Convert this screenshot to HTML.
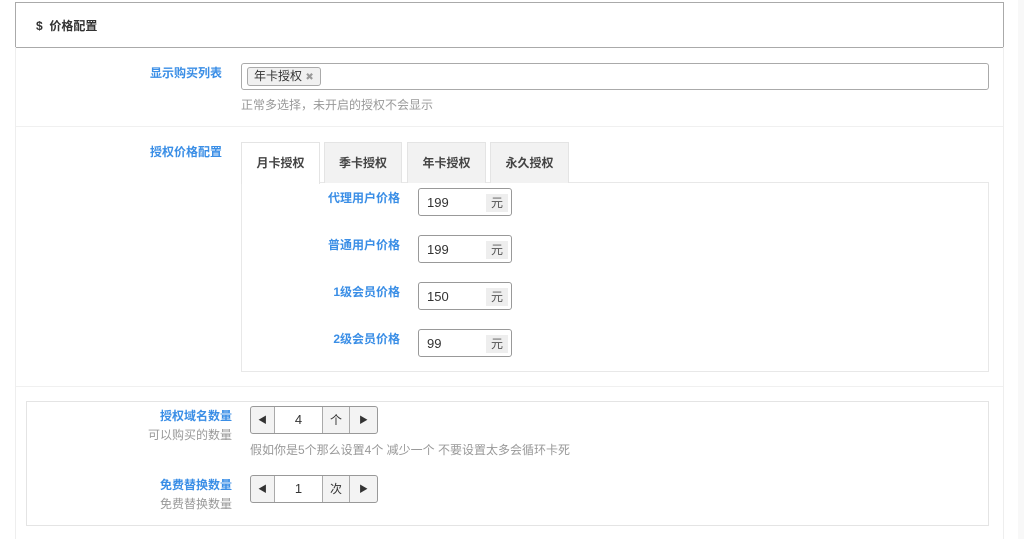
<!DOCTYPE html>
<html><head><meta charset="utf-8"><style>
*{box-sizing:border-box;margin:0;padding:0}
body{width:1024px;height:539px;background:#fff;font-family:"Liberation Sans","Noto Sans CJK SC",sans-serif;font-size:12px;color:#333;position:relative;overflow:hidden}
.a{position:absolute}
.lbl{color:#3a8ee6;font-weight:bold;text-align:right}
.help{color:#999}
.inp{border:1px solid #aaa;border-radius:3px;background:#fff}
.tab{position:absolute;top:142px;height:41px;background:#f2f2f2;border:1px solid #e4e4e4;border-bottom:none;text-align:center;line-height:40px;font-weight:bold;color:#444}
.pr{position:absolute;left:418px;width:94px;height:28px;border:1px solid #999;border-radius:3px}
.pr span{position:absolute;left:8px;top:6px;font-size:13px}
.pr i{position:absolute;right:3px;top:5px;width:22px;height:18px;background:#eee;font-style:normal;text-align:center;line-height:18px;color:#555}
.pl{position:absolute;width:150px;left:250px;text-align:right}
.sp{position:absolute;left:250px;width:128px;height:28px;border:1px solid #999;border-radius:3px;background:#f3f3f3;display:flex}
.sp div{height:100%;border-right:1px solid #aaa;text-align:center;line-height:26px}
</style></head><body>
<div class="a" style="left:15px;top:2px;width:989px;height:46px;border:1px solid #aaa"></div>
<div class="a" style="left:36px;top:17px;font-weight:bold;font-size:12px">$ &nbsp;价格配置</div>
<div class="a" style="left:15px;top:47px;width:1px;height:492px;background:#eee"></div>
<div class="a" style="left:1003px;top:47px;width:1px;height:492px;background:#eee"></div>
<div class="a" style="left:1018px;top:0;width:6px;height:539px;background:#f8f8f8"></div>

<div class="a lbl" style="left:100px;width:122px;top:64px">显示购买列表</div>
<div class="a inp" style="left:241px;top:63px;width:748px;height:27px"></div>
<div class="a" style="left:247px;top:67px;width:74px;height:19px;border:1px solid #aaa;border-radius:3px;background:#f0f0f0;padding-left:6px;line-height:17px">年卡授权 <span style="color:#999;font-size:10px">✖</span></div>
<div class="a help" style="left:241px;top:96px">正常多选择，未开启的授权不会显示</div>
<div class="a" style="left:16px;top:126px;width:987px;height:1px;background:#f0f0f0"></div>

<div class="a lbl" style="left:100px;width:122px;top:143px">授权价格配置</div>
<div class="a" style="left:241px;top:182px;width:748px;height:190px;border:1px solid #e8e8e8"></div>
<div class="tab" style="left:241px;width:79px;background:#fff;height:42px">月卡授权</div>
<div class="tab" style="left:324px;width:78px">季卡授权</div>
<div class="tab" style="left:407px;width:79px">年卡授权</div>
<div class="tab" style="left:490px;width:79px">永久授权</div>

<div class="pl lbl" style="top:189px">代理用户价格</div>
<div class="pr" style="top:188px"><span>199</span><i>元</i></div>
<div class="pl lbl" style="top:236px">普通用户价格</div>
<div class="pr" style="top:235px"><span>199</span><i>元</i></div>
<div class="pl lbl" style="top:283px">1级会员价格</div>
<div class="pr" style="top:282px"><span>150</span><i>元</i></div>
<div class="pl lbl" style="top:330px">2级会员价格</div>
<div class="pr" style="top:329px"><span>99</span><i>元</i></div>

<div class="a" style="left:16px;top:386px;width:987px;height:1px;background:#f0f0f0"></div>
<div class="a" style="left:26px;top:401px;width:963px;height:125px;border:1px solid #e4e4e4"></div>

<div class="a lbl" style="left:100px;width:132px;top:407px">授权域名数量</div>
<div class="a help" style="left:100px;width:132px;top:426px;text-align:right">可以购买的数量</div>
<div class="sp" style="top:406px"><div style="width:24px;font-size:9px">◀</div><div style="width:48px;background:#fff;font-size:13px">4</div><div style="width:27px">个</div><div style="width:27px;border:none;font-size:9px">▶</div></div>
<div class="a help" style="left:250px;top:441px">假如你是5个那么设置4个 减少一个 不要设置太多会循环卡死</div>

<div class="a lbl" style="left:100px;width:132px;top:476px">免费替换数量</div>
<div class="a help" style="left:100px;width:132px;top:495px;text-align:right">免费替换数量</div>
<div class="sp" style="top:475px"><div style="width:24px;font-size:9px">◀</div><div style="width:48px;background:#fff;font-size:13px">1</div><div style="width:27px">次</div><div style="width:27px;border:none;font-size:9px">▶</div></div>
</body></html>
